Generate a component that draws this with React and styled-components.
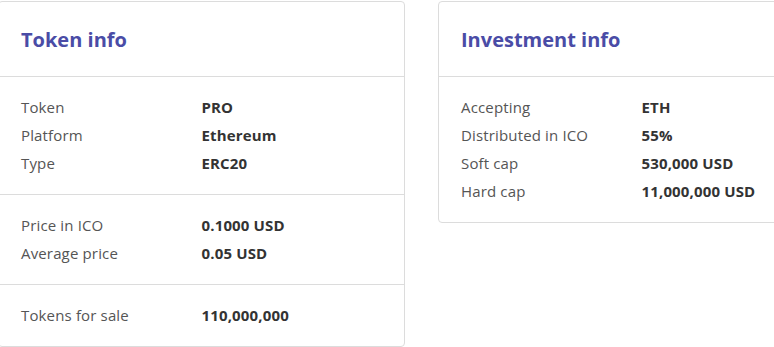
import React from "react";
import styled, { createGlobalStyle } from "styled-components";

const Global = createGlobalStyle`
  html, body { margin: 0; padding: 0; background: #fff; }
  body { font-family: "Open Sans", "Liberation Sans", sans-serif; }
  *, *::before, *::after { box-sizing: border-box; }
`;

const Page = styled.div`
  display: flex;
  align-items: flex-start;
  gap: 33px;
  padding-top: 1px;
  margin-left: -2px;
  width: 900px;
`;

const Card = styled.section`
  width: 407px;
  flex: none;
  border: 1px solid #dcdcdc;
  border-radius: 4px;
  background: #fff;
`;

const Header = styled.header`
  padding: 0 22px;
  height: 75px;
  display: flex;
  align-items: center;
  border-bottom: 1px solid #dcdcdc;
`;

const Title = styled.h2`
  margin: 0;
  font-size: 20px;
  font-weight: 700;
  color: #4a4ca6;
`;

const Group = styled.div`
  padding: 16px 22px 17px;
  & + & { border-top: 1px solid #dcdcdc; }
`;

const Row = styled.div`
  display: grid;
  grid-template-columns: 180.5px 1fr;
  line-height: 28px;
  font-size: 15px;
  letter-spacing: 0.15px;
`;

const Label = styled.span`
  color: #555;
`;

const Value = styled.span`
  color: #333;
  font-weight: 700;
`;

const InfoCard = ({ title, groups }) => (
  <Card>
    <Header><Title>{title}</Title></Header>
    {groups.map((rows, i) => (
      <Group key={i}>
        {rows.map(([k, v]) => (
          <Row key={k}><Label>{k}</Label><Value>{v}</Value></Row>
        ))}
      </Group>
    ))}
  </Card>
);

export default function App() {
  return (
    <>
      <Global />
      <Page>
        <InfoCard
          title="Token info"
          groups={[
            [["Token", "PRO"], ["Platform", "Ethereum"], ["Type", "ERC20"]],
            [["Price in ICO", "0.1000 USD"], ["Average price", "0.05 USD"]],
            [["Tokens for sale", "110,000,000"]],
          ]}
        />
        <InfoCard
          title="Investment info"
          groups={[
            [["Accepting", "ETH"], ["Distributed in ICO", "55%"], ["Soft cap", "530,000 USD"], ["Hard cap", "11,000,000 USD"]],
          ]}
        />
      </Page>
    </>
  );
}
